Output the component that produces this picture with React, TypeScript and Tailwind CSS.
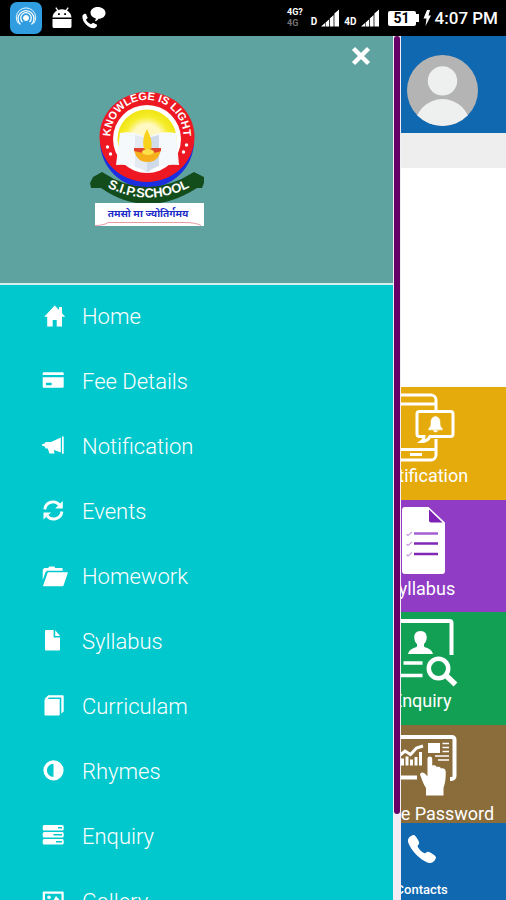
import React from "react";
import { IoCall } from "react-icons/io5";

const menuItems = [
  {
    label: "Home",
    icon: (
      <path d="M12.7.5 17 5V2h3v6.3l3.2 3.4H20v9.8h-5.3V15h-4v6.5H5.2v-9.8h-3z" />
    ),
  },
  {
    label: "Fee Details",
    icon: (
      <path
        fillRule="evenodd"
        d="M1.7 2.3h19a1 1 0 0 1 1 1V5H.7V3.300a1 1 0 0 1 1-1zM.7 7.300h21v9.400a1 1 0 0 1-1 1h-19a1 1 0 0 1-1-1zM4 12.700v2.500h5.700v-2.500z"
      />
    ),
  },
  {
    label: "Notification",
    icon: (
      <path d="M20 1.500h1.700v17.200H20zM18.800 2.500v15l-6-2.200-1 0 .8 3.200H7.400L5.800 13.500H3.500L3 11.800 0 10.600V9.300l3-1 .5-1.200H9z" />
    ),
  },
  {
    label: "Events",
    icon: (
      <>
        <path
          d="M2.800 9.300A8.300 8.300 0 0 1 17.500 5M19.900 11.500A8.300 8.300 0 0 1 5.300 16"
          fill="none"
          stroke="currentColor"
          strokeWidth="2.900"
        />
        <path d="M20.800 1v7.400h-7.600zM1.500 19.600v-7.200h7.600z" />
      </>
    ),
  },
  {
    label: "Homework",
    icon: (
      <path d="M.7 15V5l1.500-2h4l1-1.500h5L13.300 3h6.400a1 1 0 0 1 1 1v1.800H5.200L3.600 7zM5.800 7.300h19.400a.6.600 0 0 1 .6.800l-4.300 12.400a1 1 0 0 1-1 .7H.9z" />
    ),
  },
  {
    label: "Syllabus",
    icon: (
      <path d="M4 0h7.600v7.600H18v12a1 1 0 0 1-1 1H4a1 1 0 0 1-1-1V1a1 1 0 0 1 1-1zm9.200.300 4.900 5.600h-4.900z" />
    ),
  },
  {
    label: "Curriculam",
    icon: (
      <>
        <path d="M2.500 5v14.600a1 1 0 0 0 1 1h13.200a1 1 0 0 0 1-1V4H3.500z" />
        <path d="M2.500 4 6.300.300h14.400a1 1 0 0 1 1 1v15.200l-2.400 2V2.500H7L5.500 4z" />
      </>
    ),
  },
  {
    label: "Rhymes",
    icon: (
      <path
        fillRule="evenodd"
        d="M11.500.200a10.100 10.100 0 1 1 0 20.200 10.100 10.100 0 0 1 0-20.200zM11.500 3.700a6.600 6.600 0 0 0 0 13.200z"
      />
    ),
  },
  {
    label: "Enquiry",
    icon: (
      <path
        fillRule="evenodd"
        d="M2.200 0h18a1.500 1.500 0 0 1 1.500 1.500v2.500a1.500 1.500 0 0 1-1.500 1.500h-18A1.500 1.500 0 0 1 .7 4V1.500A1.500 1.500 0 0 1 2.200 0zM16 2v1.400h4V2zM2.200 7h18a1.500 1.500 0 0 1 1.500 1.500V11a1.500 1.500 0 0 1-1.500 1.500h-18A1.500 1.500 0 0 1 .7 11V8.500A1.500 1.500 0 0 1 2.200 7zM11.500 9v1.400H20V9zM2.200 14h18a1.500 1.500 0 0 1 1.500 1.500V18a1.500 1.500 0 0 1-1.500 1.500h-18A1.500 1.500 0 0 1 .7 18v-2.500A1.500 1.500 0 0 1 2.200 14zM14 16v1.400h6V16z"
      />
    ),
  },
  {
    label: "Gallery",
    icon: (
      <>
        <path
          fillRule="evenodd"
          d="M1.700 1.500h19a1 1 0 0 1 1 1v16H.7v-16a1 1 0 0 1 1-1zM3 3.800V16h16.500V3.800z"
        />
        <circle cx="7" cy="7.300" r="1.800" />
        <path d="m4 15 3.500-4 2.500 2 4-7 4.500 5v4z" />
      </>
    ),
  },
];

const tiles = [
  {
    label: "Notification",
    color: "bg-[#e5ab0d]",
    icon: (
      <g fill="none" stroke="currentColor" strokeWidth="3">
        <path d="M54 17V6.500A5 5 0 0 0 49 2H14a5 5 0 0 0-5 5v55a5 5 0 0 0 5 5h35a5 5 0 0 0 5-5V46" />
        <path d="M9 11h44M9 56.500h44" />
        <path d="M28 61.500h12" />
        <path d="M37.500 18.500h31a2.500 2.500 0 0 1 2.500 2.500v20a2.500 2.500 0 0 1-2.500 2.500H48c-1.500 3-3.500 5-8.500 5 2-1.500 2.500-3 2.500-5h-4.500A2.500 2.500 0 0 1 35 41V21a2.500 2.500 0 0 1 2.500-2.500z" />
        <path
          d="M53.500 23.500c3.500.5 4.500 3 4.500 6 0 3.500.5 4.500 2.300 6v1.300H46.700v-1.300c1.800-1.500 2.300-2.500 2.300-6 0-3 1-5.500 4.500-6zM51.500 37.500h4c0 2-4 2-4 0z"
          fill="currentColor"
          strokeWidth="0.500"
        />
      </g>
    ),
  },
  {
    label: "Syllabus",
    color: "bg-[#903cc4]",
    icon: (
      <>
        <path
          d="M23 1h23.500L63 16.500V65a3 3 0 0 1-3 3H23a3 3 0 0 1-3-3V4a3 3 0 0 1 3-3z"
          fill="currentColor"
        />
        <path d="M47 3.500 60.500 16.500H49a2 2 0 0 1-2-2z" fill="#7d22b4" />
        <path d="M32 27.500h24" stroke="#a45fd0" strokeWidth="2.500" />
        <path d="M32 37.500h24M32 48h24" stroke="#8127b5" strokeWidth="2.500" />
        <path
          d="m24.500 28 1.500 1.500 4-3.500M24.500 38l1.500 1.500 4-3.500M24.500 48.500 26 50l4-3.500"
          fill="none"
          stroke="#c79be0"
          strokeWidth="1.200"
        />
      </>
    ),
  },
  {
    label: "Enquiry",
    color: "bg-[#12a054]",
    icon: (
      <g fill="none" stroke="currentColor" strokeWidth="4">
        <path d="M69.500 37V5a2 2 0 0 0-2-2H12a2 2 0 0 0-2 2v55" />
        <path d="M21.500 45h19M14 57.500h26.500" strokeWidth="3.500" />
        <circle cx="56.500" cy="50.500" r="9.700" strokeWidth="4.500" />
        <path d="m63.500 57 10 9.500" strokeWidth="5.500" />
        <path
          d="M38.500 13c4.500 0 6.500 3 6.200 7-.2 3-1.400 4.800-2.700 6v2.500c3 2 7.500 2.200 9 7.500H26c1.500-5.300 6-5.500 9-7.500V26c-1.300-1.200-2.500-3-2.700-6-.3-4 1.700-7 6.200-7z"
          fill="currentColor"
          stroke="none"
        />
      </g>
    ),
  },
  {
    label: "Change Password",
    color: "bg-[#8a6d3b]",
    icon: (
      <g fill="none" stroke="currentColor" strokeWidth="4">
        <path d="M68 48h1.500a3 3 0 0 0 3-3V8.500A2.500 2.500 0 0 0 70 6H10M10 46.500h25" />
        <path
          d="M20.500 34.500v-7M25 34.500v-9M29.500 34.500v-6M34 34.500V26M38.500 34.500V21"
          strokeWidth="3"
        />
        <path d="m17 25 6-5 5.500 3.500 6-6.500 6.500-2" strokeWidth="3" />
        <path d="M46 12h12v10H46z" fill="currentColor" stroke="none" />
        <path
          d="M60.500 12.500H67M60.500 16.500H67M60.500 20.500H67M53 25h14M56 29h11"
          strokeWidth="1.500"
        />
        <path
          d="M45.500 28c0-3.200 4.700-3.200 4.700 0v6.500c1.800-.8 3.800-.3 4.500 1.500 1.800-.8 3.800-.2 4.300 1.500 2.500-.8 4.800.5 4.800 3.500 0 7-.8 12-2.300 16v7.500H44V57c-3-4-4-9-6-13.500.8-3.500 4.500-2.500 7.500 2z"
          fill="currentColor"
          stroke="none"
        />
      </g>
    ),
  },
];

function SignalBars() {
  return (
    <svg viewBox="0 0 19 18" className="h-[18px] w-[19px] shrink-0" fill="white">
      <path d="M0 17.500 4 14v3.500zM4.600 13.500l3.400-3v7h-3.400zM8.800 9.500 12.600 6v11.500H8.800zM13.400 4.500l4.600-4v17h-4.600z" />
    </svg>
  );
}

function StatusBar() {
  return (
    <div className="flex h-9 shrink-0 items-center justify-between bg-black pr-2 pl-2.5 text-white">
      <div className="flex items-center gap-2.5">
        <svg viewBox="0 0 32 32" className="h-8 w-8" fill="none" stroke="white">
          <rect width="32" height="32" rx="7" fill="#2f9de0" stroke="none" />
          <circle cx="16" cy="16" r="2.500" fill="white" />
          <path
            d="M12.500 20a5.300 5.300 0 1 1 7 0M10.500 22.500a8 8 0 1 1 11 0"
            strokeWidth="1.300"
          />
          <path d="M8.300 21.500a9.700 9.700 0 1 1 15.400 0" strokeWidth="0.900" />
        </svg>
        <svg viewBox="0 0 20 22" className="h-[22px] w-5" fill="white">
          <path
            fillRule="evenodd"
            d="M.5 10.500C.8 7 2.500 4.800 5 3.500L3.300 1l1-.7L6.300 3c2.400-.9 5-.9 7.400 0l2-2.700 1 .7L15 3.500c2.500 1.300 4.200 3.500 4.500 7zM6 6.300v1.800h1.800V6.300zm6.200 0v1.800H14V6.300zM.5 12h19v7.500a1.500 1.500 0 0 1-1.500 1.500H2A1.500 1.500 0 0 1 .5 19.500z"
          />
        </svg>
        <svg viewBox="0 0 24 22" className="h-[22px] w-6" fill="white">
          <path d="M15.500 0C20 0 23.500 2.500 23.500 6s-3 5.700-7 5.800c-.8 1.500-2 2.200-3.700 2.500.8-1 1-2 .9-3-3.200-.8-5.200-2.800-5.200-5.300 0-3.500 3-6 7-6z" />
          <path d="M.5 8.500C1.500 7 3 6.500 4 7l1.700 4L4 12.500c.8 2 2.500 3.700 5 4.800l2-1.500 4 2c.3 1.500-1 3-3 3.500C6 21.500-.5 14.500.5 8.500z" />
        </svg>
      </div>

      <div className="flex items-center gap-1">
        <div className="flex flex-col text-[9px] leading-[11px] font-bold">
          <span>4G?</span>
          <span className="text-neutral-500">4G</span>
        </div>
        <span className="pt-2 pl-1 text-[10px] leading-3 font-bold">D</span>
        <SignalBars />
        <span className="pt-2 text-[10px] leading-3 font-bold">4D</span>
        <SignalBars />
        <div className="ml-1 flex items-center">
          <span className="h-[15px] w-7 rounded-xs bg-white text-center text-sm leading-[15px] font-bold text-black">
            51
          </span>
          <span className="h-2 w-[3px] bg-white" />
        </div>
        <svg viewBox="0 0 8 16" className="h-4 w-2" fill="white">
          <path d="M4 0h3L5.500 5.500H8L2.500 16l1-7.500H.5z" />
        </svg>
        <span className="text-[17px] leading-6 font-medium">4:07 PM</span>
      </div>
    </div>
  );
}

function SchoolLogo() {
  return (
    <svg
      viewBox="0 0 140 160"
      className="mt-11 ml-20 h-40 w-[140px] shrink-0"
      role="img"
      aria-label="S.I.P. School"
    >
      <defs>
        <path id="motto" d="M35 74A36.500 36.500 0 1 1 99 74" />
        <path id="school" d="M18 102Q68 133 119 102" />
        <radialGradient id="sun">
          <stop offset="0.500" stopColor="#fff8c0" />
          <stop offset="0.750" stopColor="#f6ee2c" />
          <stop offset="1" stopColor="#f0e414" />
        </radialGradient>
      </defs>
      <circle cx="67" cy="61" r="47" fill="#1b2fe0" />
      <ellipse cx="67" cy="57" rx="47.500" ry="45" fill="#ed1822" />
      <circle cx="67" cy="59" r="34" fill="white" />
      <circle cx="67" cy="59" r="29.500" fill="url(#sun)" />
      <path
        d="M40 53q14-3 27 5 13-8 29-5l3 32q-18-2-32 8-15-10-31-8z"
        fill="#f6f9fc"
      />
      <path d="M67 58v35q5-5 12-7V55z" fill="#cfdbe8" />
      <path d="M67 58v35q-5-5-12-6V55z" fill="#e3eaf2" />
      <path d="M67 49c-3 6-5 12-3 20q3 3 7 0c2-7-1-13-4-20z" fill="#f9d21c" />
      <path d="M54 69h27q-2 13-13.500 13T54 69z" fill="#f6b01b" />
      <path d="M54 68h9l4 2 5-2h9v3q-5 2-13 2t-14-2z" fill="#e0452c" />
      <ellipse cx="68" cy="72" rx="6" ry="3" fill="#fbe04a" />
      <path
        d="M10 103 13 97 22 92Q67 122 114 92L124 97V103L122 108 117 108Q67 140 21 108L11 108z"
        fill="#144d1c"
      />
      <g fill="white" className="font-['Liberation_Sans'] font-bold">
        <text fontSize="11">
          <textPath href="#motto" startOffset="50%" textAnchor="middle">
            KNOWLEGE IS LIGHT
          </textPath>
        </text>
        <text fontSize="13">
          <textPath href="#school" startOffset="50%" textAnchor="middle">
            S.I.P.SCHOOL
          </textPath>
        </text>
        <circle cx="27.500" cy="67" r="1.700" />
        <circle cx="30.500" cy="74" r="1.700" />
        <circle cx="106.500" cy="65" r="1.700" />
        <circle cx="103.500" cy="72" r="1.700" />
      </g>
      <path d="M15 123h109v23H15z" fill="white" />
      <path
        d="M15 145.500q9 0 13-3h76q12 0 17 3"
        fill="none"
        stroke="#e59aa5"
        strokeWidth="1"
      />
      <text
        x="68"
        y="137"
        fontSize="10"
        textAnchor="middle"
        fill="#1c2cc8"
        className="font-['Noto_Sans',sans-serif] font-bold italic"
      >
        तमसो मा ज्योतिर्गमय
      </text>
    </svg>
  );
}

function Drawer() {
  return (
    <aside className="absolute inset-y-0 left-0 z-10 flex w-[401px] max-w-full overflow-hidden">
      <div className="min-w-0 flex-1 bg-[#00c8cd]">
        <div className="flex h-[249px] items-start border-b-2 border-[#d5eeee] bg-[#5fa3a1]">
          <SchoolLogo />
          <button
            type="button"
            aria-label="Close menu"
            className="mt-2 mr-5 ml-auto flex h-6 w-6 items-center justify-center text-white"
          >
            <svg
              viewBox="0 0 20 20"
              className="h-5 w-5"
              stroke="currentColor"
              strokeWidth="4.500"
            >
              <path d="m2.500 2.500 15 15M17.500 2.500l-15 15" />
            </svg>
          </button>
        </div>

        <nav>
          {menuItems.map((item) => (
            <a
              key={item.label}
              href="#"
              className="flex gap-4 pt-5 pb-[21px] pl-[42px] text-[22px] leading-6 font-light text-white"
            >
              <svg
                viewBox="0 0 24 24"
                className="h-6 w-6 shrink-0 overflow-visible"
                fill="currentColor"
                aria-hidden="true"
              >
                {item.icon}
              </svg>
              {item.label}
            </a>
          ))}
        </nav>
      </div>

      {/* Scroll track */}
      <div className="w-2 shrink-0 bg-[#f3eef5] px-px">
        <div className="h-[90%] rounded-full bg-[#660066]" />
      </div>
    </aside>
  );
}

export default function App() {
  return (
    <div className="flex h-screen flex-col overflow-hidden bg-white font-['Roboto',sans-serif]">
      <StatusBar />

      <div className="relative flex min-h-0 flex-1 flex-col">
        <header className="flex h-[97px] shrink-0 justify-end bg-[#1068b1] pt-[19px] pr-7">
          <svg viewBox="0 0 70 70" className="h-[71px] w-[71px]">
            <defs>
              <clipPath id="avatar">
                <circle cx="35" cy="35" r="35" />
              </clipPath>
            </defs>
            <g clipPath="url(#avatar)">
              <path d="M0 0h70v70H0z" fill="#b4b4b4" />
              <circle cx="35" cy="25.500" r="14.500" fill="#eeefef" />
              <circle cx="35" cy="71" r="27.500" fill="#eeefef" />
            </g>
          </svg>
        </header>
        <div className="h-[35px] shrink-0 bg-[#eeeeee]" />

        <main className="min-h-0 flex-1 overflow-hidden">
          <div className="h-[219px] bg-white" />
          <div className="grid h-[450px] grid-cols-3 grid-rows-4">
            {tiles.map((tile) => (
              <a
                key={tile.label}
                href="#"
                className={`col-start-3 flex flex-col items-center gap-px pt-1.5 text-lg leading-5 whitespace-nowrap text-white ${tile.color}`}
              >
                <svg
                  viewBox="0 0 80 72"
                  className="h-[72px] w-20 shrink-0"
                  aria-hidden="true"
                >
                  {tile.icon}
                </svg>
                {tile.label}
              </a>
            ))}
          </div>
        </main>

        <footer className="grid h-[77px] shrink-0 grid-cols-3 bg-[#1068b1]">
          <a
            href="#"
            className="col-start-3 flex flex-col items-center justify-between pt-2.5 pb-0.5 text-[13px] leading-4 font-medium text-white"
          >
            <IoCall className="h-8 w-8" />
            Contacts
          </a>
        </footer>

        <Drawer />
      </div>
    </div>
  );
}
